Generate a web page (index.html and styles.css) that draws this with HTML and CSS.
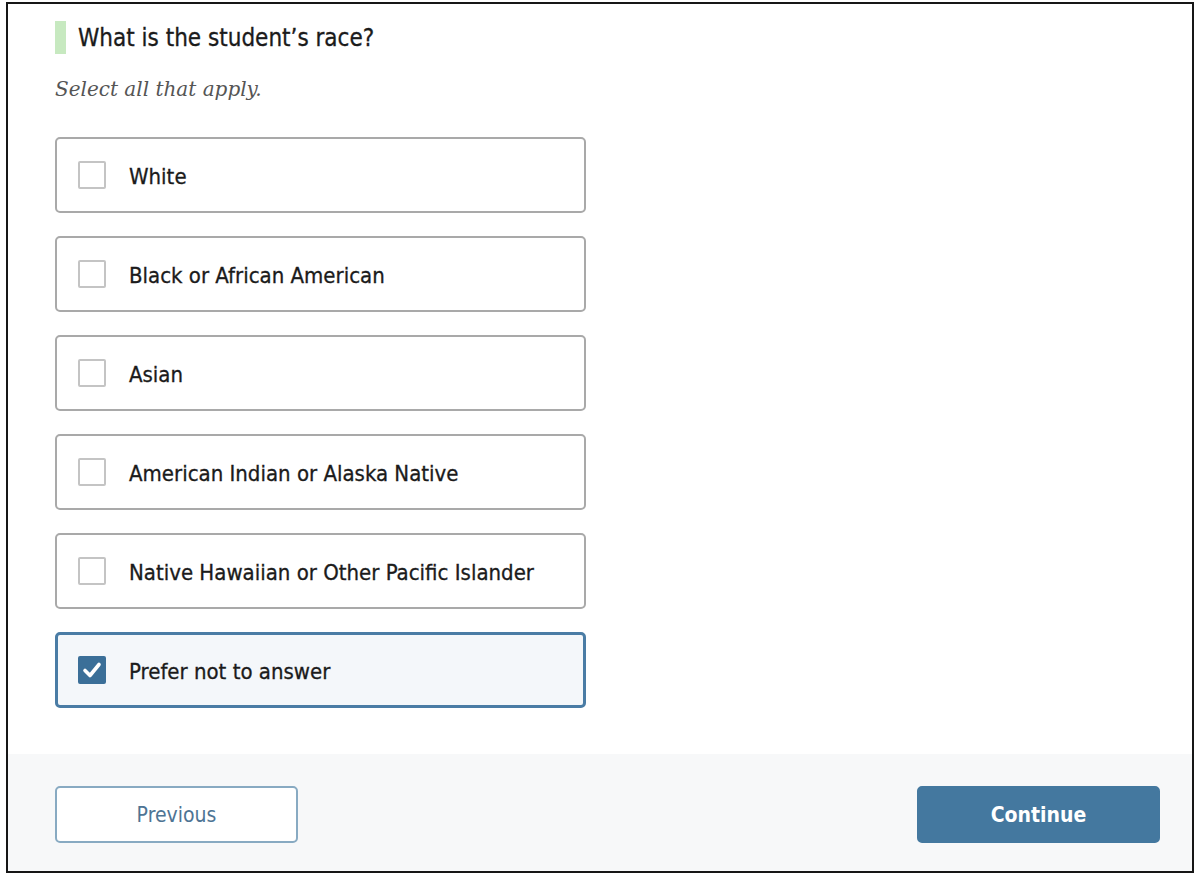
FILE: index.html
```html
<!DOCTYPE html>
<html lang="en">
<head>
<meta charset="utf-8">
<title>Student race</title>
<link rel="stylesheet" href="styles.css">
</head>
<body>
<div class="frame">
  <main class="content">
    <h1 class="question"><span class="marker"></span>What is the student’s race?</h1>
    <p class="hint">Select all that apply.</p>
    <ul class="options">
      <li class="option"><span class="box"></span><span class="label">White</span></li>
      <li class="option"><span class="box"></span><span class="label">Black or African American</span></li>
      <li class="option"><span class="box"></span><span class="label">Asian</span></li>
      <li class="option"><span class="box"></span><span class="label">American Indian or Alaska Native</span></li>
      <li class="option"><span class="box"></span><span class="label">Native Hawaiian or Other Pacific Islander</span></li>
      <li class="option selected"><span class="box checked"><svg viewBox="0 0 28 28" width="28" height="28"><path d="M7 14.5 L12 19.5 L21 8.5" fill="none" stroke="#fff" stroke-width="3.6" stroke-linecap="round" stroke-linejoin="round"/></svg></span><span class="label">Prefer not to answer</span></li>
    </ul>
  </main>
  <footer class="footer">
    <button class="btn btn-secondary">Previous</button>
    <button class="btn btn-primary">Continue</button>
  </footer>
</div>
</body>
</html>
```
FILE: styles.css
```css
html, body {
  margin: 0;
  padding: 0;
  background: #ffffff;
}
body {
  padding: 2px 0 0 6px;
  font-family: "DejaVu Sans Condensed", "Liberation Sans", sans-serif;
  font-stretch: condensed;
  color: #1b1b1b;
}
.frame {
  box-sizing: border-box;
  width: 1188px;
  height: 871px;
  border: 2px solid #161616;
  display: flex;
  flex-direction: column;
  background: #fff;
}
.content {
  flex: 1;
  padding: 17px 0 0 47px;
}
.question {
  margin: 0;
  display: flex;
  align-items: center;
  gap: 12px;
  font-size: 24px;
  font-weight: normal;
  height: 33px;
  color: #1b1b1b;
  -webkit-text-stroke: 0.3px #1b1b1b;
}
.marker {
  width: 11px;
  height: 33px;
  background: #c7e9c0;
}
.hint {
  margin: 21px 0 0 0;
  font-family: "DejaVu Serif", "Liberation Serif", serif;
  font-stretch: normal;
  font-style: italic;
  font-size: 20px;
  color: #555555;
  line-height: 28px;
}
.options {
  list-style: none;
  margin: 34px 0 0 0;
  padding: 0;
  display: flex;
  flex-direction: column;
  gap: 23px;
}
.option {
  box-sizing: border-box;
  width: 531px;
  height: 76px;
  border: 2px solid #a9a9a9;
  border-radius: 5px;
  display: flex;
  align-items: center;
  padding-left: 21px;
  gap: 23px;
  font-size: 22px;
  color: #1b1b1b;
  -webkit-text-stroke: 0.3px #1b1b1b;
}
.label {
  padding-top: 3px;
}
.box {
  box-sizing: border-box;
  width: 28px;
  height: 28px;
  border: 2px solid #c4c4c4;
  border-radius: 2px;
  background: #fff;
  display: flex;
  align-items: center;
  justify-content: center;
}
.option.selected {
  border: 3px solid #4a7ca5;
  background: #f4f7fa;
  padding-left: 20px;
}
.box.checked {
  background: #3b6f98;
  border-color: #3b6f98;
}
.box.checked svg {
  display: block;
  flex: none;
}
.footer {
  height: 117px;
  background: #f7f8f9;
  display: flex;
  align-items: center;
  justify-content: space-between;
  padding: 4px 32px 0 47px;
  box-sizing: border-box;
}
.btn {
  box-sizing: border-box;
  width: 243px;
  height: 57px;
  border-radius: 5px;
  font-family: "DejaVu Sans Condensed", "Liberation Sans", sans-serif;
  font-stretch: condensed;
  font-size: 21px;
  cursor: pointer;
}
.btn-secondary {
  background: #fff;
  border: 2px solid #88aac2;
  color: #4e7494;
}
.btn-primary {
  background: #44789f;
  border: 2px solid #44789f;
  color: #fff;
  font-weight: bold;
}
```
